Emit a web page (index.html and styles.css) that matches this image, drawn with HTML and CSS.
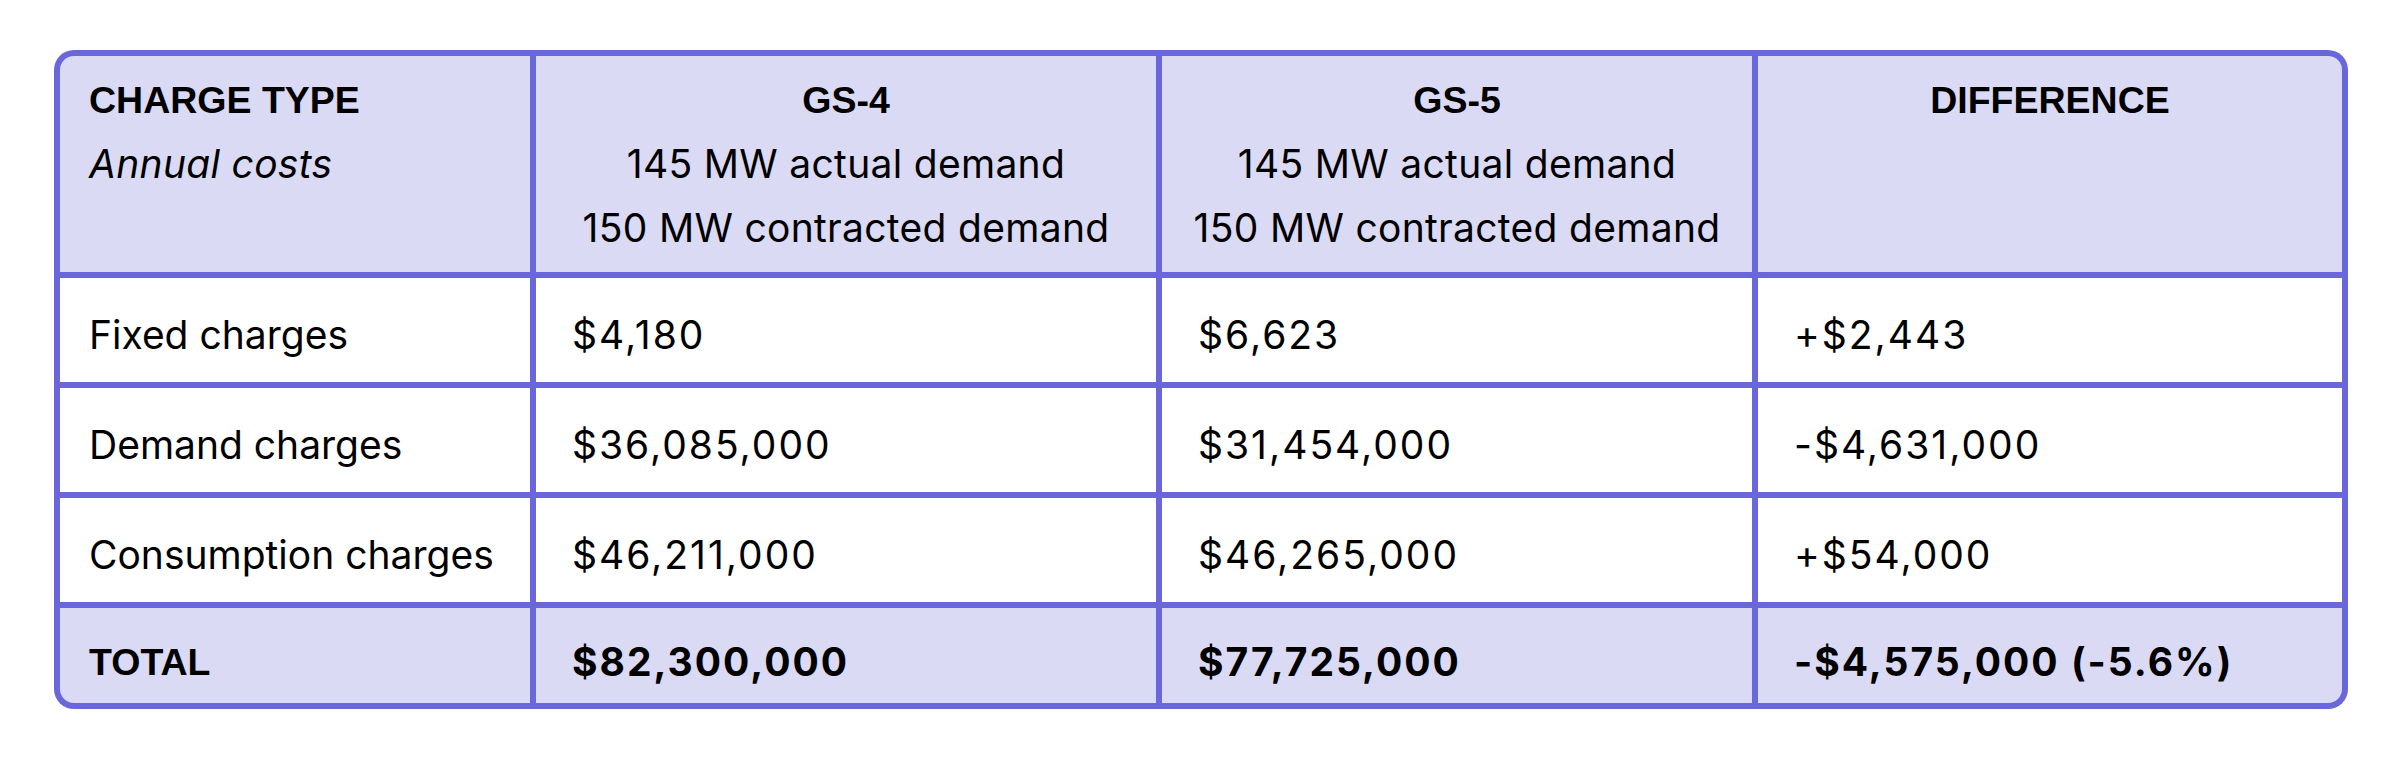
FILE: index.html
```html
<!DOCTYPE html>
<html lang="en">
<head>
<meta charset="utf-8">
<title>Charge comparison</title>
<link rel="stylesheet" href="styles.css">
</head>
<body>
<div class="page">
  <div class="table">
    <div class="cell head">
      <div class="th">CHARGE TYPE</div>
      <div class="sub italic">Annual costs</div>
    </div>
    <div class="cell head center">
      <div class="th">GS-4</div>
      <div class="sub">145 MW actual demand</div>
      <div class="sub">150 MW contracted demand</div>
    </div>
    <div class="cell head center">
      <div class="th">GS-5</div>
      <div class="sub">145 MW actual demand</div>
      <div class="sub">150 MW contracted demand</div>
    </div>
    <div class="cell head center">
      <div class="th">DIFFERENCE</div>
    </div>

    <div class="cell row label">Fixed charges</div>
    <div class="cell row val">$4,180</div>
    <div class="cell row val">$6,623</div>
    <div class="cell row val">+$2,443</div>

    <div class="cell row label">Demand charges</div>
    <div class="cell row val">$36,085,000</div>
    <div class="cell row val">$31,454,000</div>
    <div class="cell row val">-$4,631,000</div>

    <div class="cell row label">Consumption charges</div>
    <div class="cell row val">$46,211,000</div>
    <div class="cell row val">$46,265,000</div>
    <div class="cell row val">+$54,000</div>

    <div class="cell total label"><span class="th">TOTAL</span></div>
    <div class="cell total val strong">$82,300,000</div>
    <div class="cell total val strong">$77,725,000</div>
    <div class="cell total val strong">-$4,575,000 (-5.6%)</div>
  </div>
</div>
</body>
</html>
```
FILE: styles.css
```css
html, body {
  margin: 0;
  padding: 0;
  background: #ffffff;
}

.page {
  padding: 50px 0 0 54px;
}

.table {
  display: inline-grid;
  grid-template-columns: 470px 620px 590px 584px;
  grid-template-rows: 216px 104px 104px 104px 95px;
  gap: 6px;
  padding: 6px;
  background: #6a67dc;
  border-radius: 20px;
  font-family: "Inter", "Lato", sans-serif;
  color: #000000;
}

.cell {
  background: #ffffff;
  font-size: 39px;
  line-height: 64px;
}

.cell.head {
  background: #dadaf4;
  padding: 12px 29px 0 29px;
  display: flex;
  flex-direction: column;
}

.cell.head:first-child {
  border-top-left-radius: 14px;
}

.cell.head:nth-child(4) {
  border-top-right-radius: 14px;
}

.cell.head.center {
  align-items: center;
}

.th {
  font-family: "Liberation Sans", "Arial", sans-serif;
  font-weight: 700;
  font-size: 37.5px;
  letter-spacing: 0;
}

.sub {
  white-space: nowrap;
  letter-spacing: 0.3px;
}

.italic {
  font-style: italic;
}

.cell.row,
.cell.total {
  display: flex;
  align-items: center;
  padding-top: 10px;
  box-sizing: border-box;
}

.cell.label {
  padding-left: 29px;
}

.cell.val {
  padding-left: 36px;
  letter-spacing: 2px;
}

.cell.total {
  background: #dadaf4;
  padding-top: 12px;
}

.cell.total:nth-last-child(4) {
  border-bottom-left-radius: 14px;
}

.cell.total:last-child {
  border-bottom-right-radius: 14px;
}

.strong {
  font-weight: 700;
}
```
